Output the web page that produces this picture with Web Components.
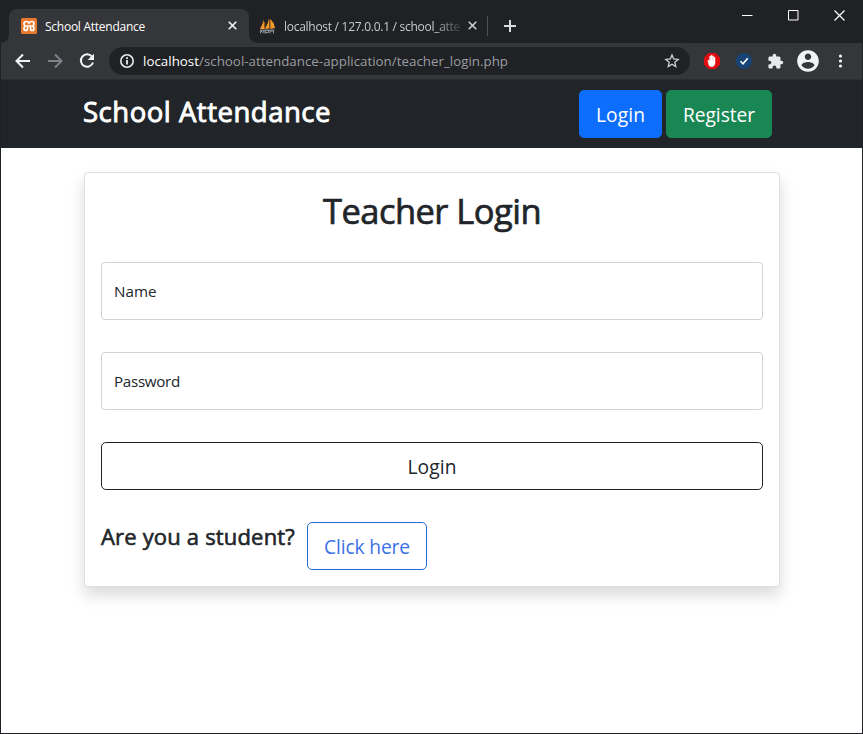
<!DOCTYPE html>
<html lang="en">
<head>
<meta charset="utf-8">
<title>School Attendance</title>
<style>
html,body{margin:0;height:100%;overflow:hidden}
body{font-family:"Open Sans","Noto Sans",sans-serif;color:#212529}
</style>
</head>
<body>
<browser-window>
  <tab-strip slot="tabs"></tab-strip>
  <tool-bar slot="toolbar"></tool-bar>
  <site-nav></site-nav>
  <login-card></login-card>
</browser-window>
<script>
const define = (name, html, after) => {
  const t = document.createElement('template');
  t.innerHTML = html;
  customElements.define(name, class extends HTMLElement {
    constructor() {
      super();
      this.attachShadow({mode: 'open'}).append(t.content.cloneNode(true));
    }
    connectedCallback() { if (after) after(this); }
  });
};

/* Text run spaced to the advance width given in "w". */
define('fit-text', `<style>
:host{display:block;white-space:nowrap;flex:none}
span{display:inline-block;white-space:pre}
</style><span><slot></slot></span>`, el => {
  const w = +el.getAttribute('w');
  const s = el.shadowRoot.querySelector('span');
  el.style.width = w + 'px';
  const natural = s.getBoundingClientRect().width;
  s.style.letterSpacing = (w - natural) / el.textContent.length + 'px';
});

define('ui-button', `<style>
:host{display:flex;box-sizing:border-box;height:48px;align-items:center;justify-content:center;border:1px solid var(--edge);border-radius:5px;background:var(--fill,transparent);color:var(--ink);font-size:19.2px;line-height:30px;padding-top:2px}
</style><slot></slot>`);

define('text-field', `<style>
:host{display:flex;box-sizing:border-box;height:58px;align-items:center;border:1px solid #ced4da;border-radius:4px;padding:0 12px 1px;font-size:15.2px;background:#fff}
</style><slot></slot>`);

define('browser-window', `<style>
:host{display:flex;flex-direction:column;box-sizing:border-box;width:863px;height:734px;background:#202124}
main{flex:1;margin:0 1px 1px;background:#fff;display:flex;flex-direction:column;min-height:0}
</style><slot name="tabs"></slot><slot name="toolbar"></slot><main><slot></slot></main>`);

define('tab-strip', `<style>
:host{display:flex;height:43px;background:#202124;color:#fff;font-size:12px;align-items:flex-end}
.tab{display:flex;align-items:center;height:34px;box-sizing:border-box}
.on{position:relative;margin-left:9px;width:240px;background:#35363a;border-radius:8px 8px 0 0;padding:0 0 1px 12px}
.on:before,.on:after{content:"";position:absolute;bottom:0;width:8px;height:8px}
.on:before{left:-8px;background:radial-gradient(circle at 0 0,transparent 7.5px,#35363a 8px)}
.on:after{right:-8px;background:radial-gradient(circle at 100% 0,transparent 7.5px,#35363a 8px)}
.on fit-text{margin:0 83px 0 8px}
.off{color:#c9cbce;padding:0 0 1px 10px}
.off fit-text{margin:0 8px 0 7px;-webkit-mask:linear-gradient(90deg,#000 150px,rgba(0,0,0,.15) 176px)}
.tab fit-text{padding-top:1px}
svg{display:block;flex:none}
.sep{width:1px;height:20px;background:#4d4f53;margin:0 16px 7px 10px}
.plus{margin-bottom:11px}
.win{margin:0 18px 22px auto;display:flex;gap:35px}
</style>
<div class="tab on">
<svg width="16" height="16" viewBox="0 0 16 16"><rect width="16" height="16" rx="1.5" fill="#e8792d"/><path d="M8 5Q7 3.500 5.200 3.500 3 3.500 3 5.700 3 7.300 4.400 8 3 8.700 3 10.500 3 12.500 4.800 12.500 6.500 12.500 6.500 10.500V8H9.500V10.500Q9.500 12.500 11.200 12.500 13 12.500 13 10.500 13 8.700 11.600 8 13 7.300 13 5.700 13 3.500 10.800 3.500 9 3.500 8 5Z" fill="none" stroke="#fff" stroke-width="1.700"/></svg>
<fit-text w="100">School Attendance</fit-text>
<svg width="9" height="9" viewBox="0 0 9 9" stroke="#f1f3f4" stroke-width="1.6"><path d="M.7.7l7.600 7.600M8.300.7L.7 8.300"/></svg>
</div>
<div class="tab off">
<svg width="18" height="16" viewBox="0 0 18 16"><path d="M1 11Q4 6 4.500 1.500L5.500 11ZM6 11Q9.500 5 10 0L10.500 10.500ZM11 1Q15 4 16 10l-4.500 1Z" fill="#f39a2b"/><path d="M5.500 4L6 11M11 2l.3 9" stroke="#c56a1c" stroke-width=".8" fill="none"/><path d="M1 11.500h15l-1.500 1.500H2Z" fill="#777b82"/><path d="M1.500 15.500v-3l2 2 1.500-2v3M6.500 15.500v-3h3v2h-3M11 15.500v-3l1.500 1 2-1v3" stroke="#8f9298" stroke-width="1" fill="none"/></svg>
<fit-text w="176">localhost / 127.0.0.1 / school_atte</fit-text>
<svg width="9" height="9" viewBox="0 0 9 9" stroke="#d2d4d7" stroke-width="1.500"><path d="M.7.7l7.600 7.600M8.300.7L.7 8.300"/></svg>
</div>
<div class="sep"></div>
<svg class="plus" width="12" height="12" viewBox="0 0 12 12" stroke="#dadce0" stroke-width="2"><path d="M6 0v12M0 6h12"/></svg>
<div class="win">
<svg width="11" height="11" stroke="#fff"><path d="M0 5.500h10.500"/></svg>
<svg width="11" height="11" stroke="#fff" fill="none"><path d="M.5.500h9.500v9.500H.5Z"/></svg>
<svg width="11" height="11" stroke="#fff" stroke-width="1.200"><path d="M.5.500l10 10M10.500.500l-10 10"/></svg>
</div>`);

define('tool-bar', `<style>
:host{display:flex;box-sizing:border-box;height:37px;background:#35363a;align-items:center;padding:0 0 0 14px;margin:0 1px;border-bottom:1px solid #2b2d30}
svg{display:block;flex:none}
.pill{display:flex;align-items:center;box-sizing:border-box;width:581px;height:28px;border-radius:14px;background:#202124;margin-left:14px;padding:0 10px;font-size:13.300px}
.a{color:#fff;margin-left:8px}.b{color:#9a9da1}
.star{margin-left:auto}
</style>
<svg width="16" height="16" viewBox="0 0 16 16" fill="none" stroke="#f1f3f4" stroke-width="2"><path d="M15 8H2M8 1.500L1.500 8 8 14.500"/></svg>
<svg style="margin-left:16px" width="16" height="16" viewBox="0 0 16 16" fill="none" stroke="#7f8286" stroke-width="2"><path d="M1 8h13M8 1.500L14.500 8 8 14.500"/></svg>
<svg style="margin-left:16px" width="16" height="16" viewBox="0 0 16 16"><path d="M13 3.700A6.200 6.200 0 1 0 14 9.500" fill="none" stroke="#f1f3f4" stroke-width="2"/><path d="M15 .7V7H8.700Z" fill="#f1f3f4"/></svg>
<div class="pill">
<svg width="16" height="16" viewBox="0 0 16 16" fill="none" stroke="#e8eaed" stroke-width="1.600"><circle cx="8" cy="8" r="6.200"/><path d="M8 7v4.500M8 4.300v1.600" stroke-width="1.800"/></svg>
<fit-text class="a" w="56">localhost</fit-text><fit-text class="b" w="309">/school-attendance-application/teacher_login.php</fit-text>
<svg class="star" width="16" height="16" viewBox="0 0 16 16" fill="none" stroke="#d0d2d6" stroke-width="1.300"><path d="M8 1.900l1.700 4.100 4.500.4-3.400 2.900 1 4.300L8 11.300l-3.800 2.300 1-4.300L1.800 6.400l4.500-.4Z"/></svg>
</div>
<svg style="margin-left:13px" width="18" height="18" viewBox="0 0 18 18"><path d="M5.500 1h7L17 5.500v7L12.500 17h-7L1 12.500v-7Z" fill="#e00d12"/><path d="M4.800 8.300l1-.2.700 1.500V4.400q.6-.7 1.200 0V8h.2V3.500q.6-.8 1.300 0V8h.2V4.100q.6-.7 1.200 0V8.500h.2V5.500q.7-.7 1.300 0V11q-.3 3.700-3.600 3.700-2.400 0-3-2.500Z" fill="#fff" stroke="#fff" stroke-width=".3"/></svg>
<svg style="margin-left:14px" width="18" height="18" viewBox="0 0 18 18"><circle cx="9" cy="9" r="8" fill="#174474"/><path d="M5.500 9.300l2.500 2.500 4.700-5.600" fill="none" stroke="#fff" stroke-width="1.600"/></svg>
<svg style="margin-left:14px" width="17" height="17" viewBox="0 0 24 24" fill="#e8eaed"><path d="M20.500 11H19V7c0-1.100-.9-2-2-2h-4V3.500a2.500 2.500 0 0 0-5 0V5H4c-1.100 0-1.990.9-1.990 2v3.800H3.500c1.490 0 2.700 1.210 2.700 2.700s-1.210 2.700-2.700 2.700H2V20c0 1.100.9 2 2 2h3.800v-1.500c0-1.490 1.210-2.700 2.700-2.700s2.700 1.210 2.700 2.700V22H17c1.100 0 2-.9 2-2v-4h1.500a2.500 2.500 0 0 0 0-5Z"/></svg>
<svg style="margin-left:11px" width="26" height="26" viewBox="0 0 24 24" fill="#f1f3f4"><path d="M12 2C6.480 2 2 6.480 2 12s4.480 10 10 10 10-4.480 10-10S17.520 2 12 2Zm0 3c1.660 0 3 1.340 3 3s-1.340 3-3 3-3-1.340-3-3 1.340-3 3-3Zm0 14.200a7.200 7.200 0 0 1-6-3.220c.03-1.990 4-3.080 6-3.080s5.970 1.090 6 3.080a7.200 7.200 0 0 1-6 3.220Z"/></svg>
<svg style="margin-left:17px" width="5" height="16" fill="#f1f3f4"><circle cx="2.500" cy="3" r="1.600"/><circle cx="2.500" cy="8" r="1.600"/><circle cx="2.500" cy="13" r="1.600"/></svg>`);

define('site-nav', `<style>
:host{display:flex;box-sizing:border-box;height:68px;flex:none;background:#212529;padding:10px 90px 0 82px;color:#fff}
.t{font-size:27.500px;line-height:38px;font-weight:400;-webkit-text-stroke:.9px currentColor;padding-top:3px}
.r{margin-left:auto;display:flex;gap:4px}
.r>*{--ink:#fff}
</style>
<fit-text class="t" w="248">School Attendance</fit-text>
<div class="r">
<ui-button style="width:83px;--fill:#0d6efd;--edge:#0d6efd"><fit-text w="49">Login</fit-text></ui-button>
<ui-button style="width:106px;--fill:#198754;--edge:#198754"><fit-text w="72">Register</fit-text></ui-button>
</div>`);

define('login-card', `<style>
:host{display:flex;flex-direction:column;box-sizing:border-box;width:696px;height:415px;margin:24px 0 0 83px;padding:16px;border:1px solid #dfdfdf;border-radius:4px;box-shadow:0 8px 16px rgba(0,0,0,.15);background:#fff}
.h{font-size:34.500px;line-height:44px;-webkit-text-stroke:.7px currentColor;align-self:center;height:73px}
text-field{margin-bottom:32px}
.q{display:flex;margin-top:32px}
.s{font-size:22px;line-height:28px;-webkit-text-stroke:.6px currentColor}
</style>
<fit-text class="h" w="218">Teacher Login</fit-text>
<text-field><fit-text w="42.5">Name</fit-text></text-field>
<text-field><fit-text w="66">Password</fit-text></text-field>
<ui-button style="--ink:#212529;--edge:#212529"><fit-text w="49">Login</fit-text></ui-button>
<div class="q"><fit-text class="s" w="194">Are you a student?</fit-text>
<ui-button style="width:120px;margin-left:12px;--ink:#3b71e6;--edge:#2369d6"><fit-text w="86">Click here</fit-text></ui-button></div>`);
</script>
</body>
</html>
